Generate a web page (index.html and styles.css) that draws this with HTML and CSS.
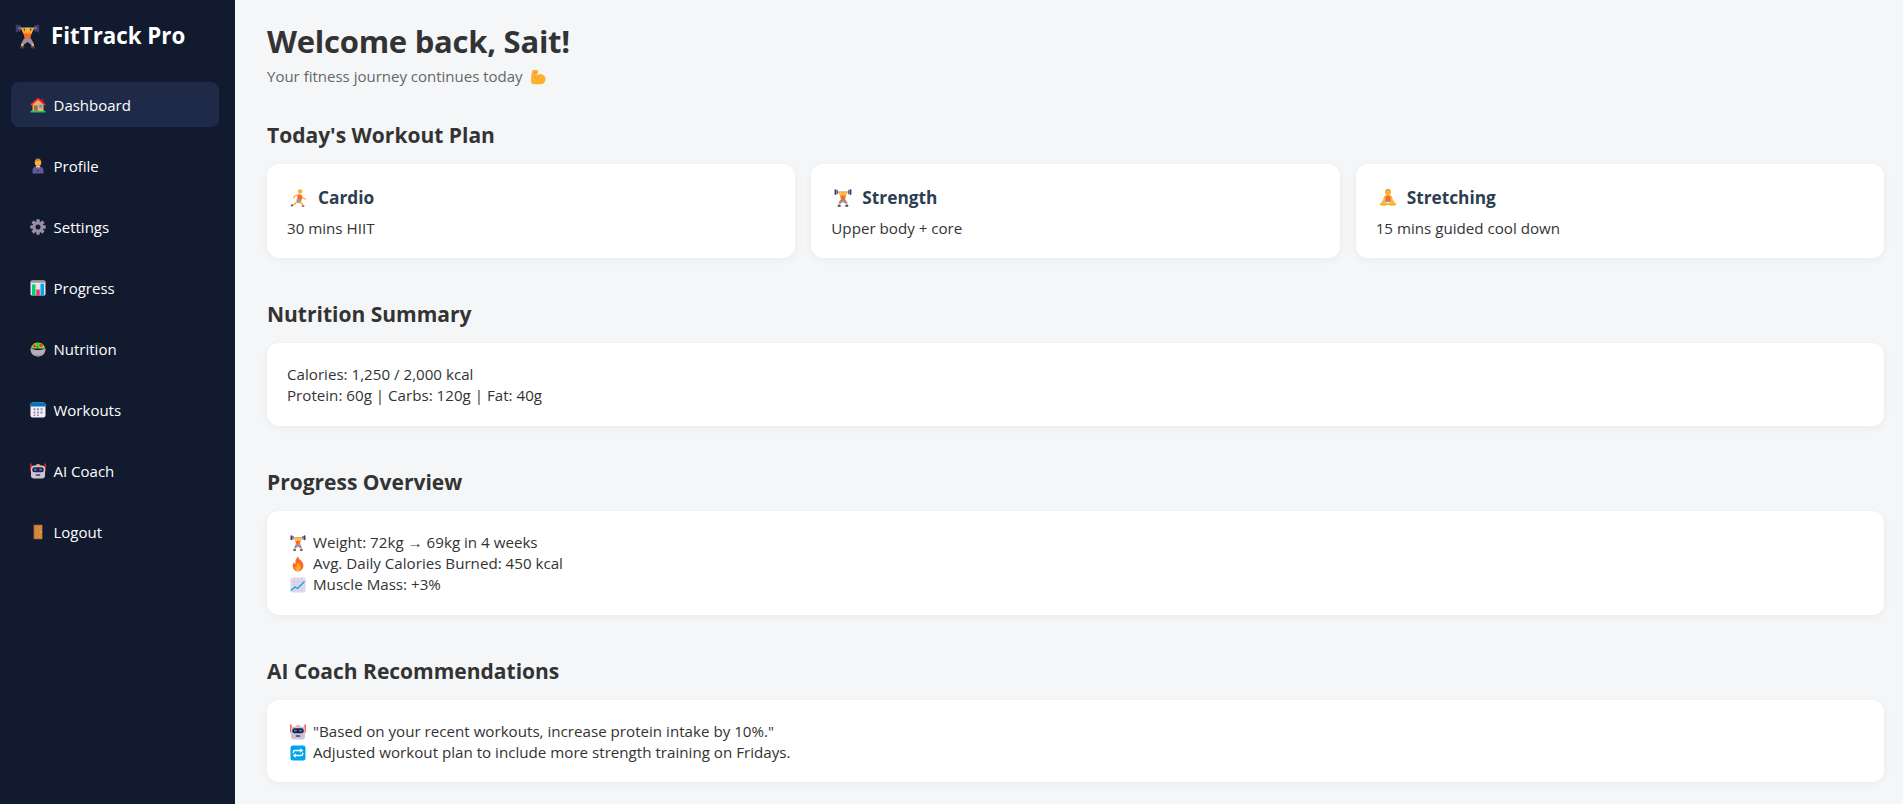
FILE: index.html
```html
<!DOCTYPE html>
<html lang="en">
<head>
<meta charset="utf-8">
<title>FitTrack Pro</title>
<link rel="stylesheet" href="styles.css">
</head>
<body>
<svg class="sprite" aria-hidden="true">
  <symbol id="i-lifter" viewBox="0 0 32 32">
    <rect x="3" y="4.400" width="26" height="2" fill="#9b9b9b"/>
    <rect x="1" y="0.500" width="3.200" height="10" rx="1.500" fill="#433b6b"/><rect x="4.600" y="1.500" width="2.400" height="8" rx="1.200" fill="#635994"/>
    <rect x="27.800" y="0.500" width="3.200" height="10" rx="1.500" fill="#433b6b"/><rect x="25" y="1.500" width="2.400" height="8" rx="1.200" fill="#635994"/>
    <path d="M7.500 5l3.500 8h10l3.500-8h-2.600l-3 5.500h-5.800L10.100 5z" fill="#ffb02e"/>
    <circle cx="16" cy="8" r="3.600" fill="#ffb02e"/>
    <path d="M11 12h10l-1.500 7.500h-7z" fill="#ff6723"/>
    <path d="M11.500 18.500h9l3.500 6.500-3.500 1.300L16 23l-4.500 3.300L8 25z" fill="#998ea4"/>
    <path d="M8 24.500l3.500 1.300L10.500 29.500H7.500zM24 24.500l-3.500 1.300L21.500 29.500h3z" fill="#ffb02e"/>
    <rect x="6.500" y="28.600" width="5.500" height="2.800" rx="1" fill="#433b6b"/><rect x="20" y="28.600" width="5.500" height="2.800" rx="1" fill="#433b6b"/>
  </symbol>
  <symbol id="i-house" viewBox="0 0 32 32">
    <rect x="1" y="27.500" width="30" height="3.500" rx="1" fill="#00d26a"/>
    <path d="M5 14L16 5l11 9v14H5z" fill="#f3ad61"/>
    <rect x="8" y="17" width="7.500" height="10.500" fill="#a56953"/>
    <rect x="18.500" y="15.500" width="6" height="6" rx=".8" fill="#5092ff"/>
    <rect x="23" y="3" width="3.500" height="7" fill="#ca0b4a"/>
    <path d="M16 1.500L.5 15l2 2.400L16 6l13.500 11.400 2-2.400z" fill="#f8312f"/>
  </symbol>
  <symbol id="i-worker" viewBox="0 0 32 32">
    <path d="M5 31v-6c0-6 5-9 11-9s11 3 11 9v6z" fill="#635994"/>
    <path d="M12 16h8l-3 8h-2z" fill="#e1d8ec"/><path d="M15 18h2l1 8-2 3-2-3z" fill="#433b6b"/>
    <circle cx="16" cy="9.500" r="6.500" fill="#ffb02e"/>
    <path d="M9.500 9c0-5 3-8 6.500-8s6.500 3 6.500 8c-1-2-2-3-3.500-3.500-2 1-4.500 1-6 .5-1.500.500-2.500 1.500-3.500 3z" fill="#d3883e"/>
  </symbol>
  <symbol id="i-gear" viewBox="0 0 32 32">
    <g fill="#998ea4"><rect x="12.500" y=".5" width="7" height="31" rx="1.500"/><rect x="12.500" y=".5" width="7" height="31" rx="1.500" transform="rotate(45 16 16)"/><rect x="12.500" y=".5" width="7" height="31" rx="1.500" transform="rotate(90 16 16)"/><rect x="12.500" y=".5" width="7" height="31" rx="1.500" transform="rotate(135 16 16)"/></g>
    <circle cx="16" cy="16" r="11" fill="#998ea4"/>
    <circle cx="16" cy="16" r="5" fill="#111a2e"/>
  </symbol>
  <symbol id="i-bars" viewBox="0 0 32 32">
    <rect x="1" y="1" width="30" height="30" rx="3" fill="#e8e1f0"/>
    <path d="M1 5.500V4a3 3 0 013-3h24a3 3 0 013 3v1.500z" fill="#9b9b9b"/>
    <rect x="4" y="9" width="7" height="22" fill="#00d26a"/>
    <rect x="12.500" y="19" width="7" height="12" fill="#f92f60"/>
    <rect x="21" y="7.500" width="7" height="23.500" fill="#00a6ed"/>
  </symbol>
  <symbol id="i-salad" viewBox="0 0 32 32">
    <path d="M2 15c0-6 6-12 14-12s14 6 14 12z" fill="#86d72f"/>
    <circle cx="9" cy="10" r="3" fill="#f8312f"/><circle cx="22" cy="8.500" r="3.400" fill="#f8312f"/><circle cx="15.500" cy="6" r="2.400" fill="#00d26a"/><circle cx="15" cy="11.500" r="2.200" fill="#008463"/>
    <path d="M1 14.500c4 2.500 9 3.500 15 3.500s11-1 15-3.500c.5 8.500-4 16.500-15 16.500S.5 23 1 14.500z" fill="#b4acbc"/>
    <path d="M6 26c3 3 6 5 10 5s7-2 10-5c-3 1.500-6 2-10 2s-7-.5-10-2z" fill="#998ea4"/>
  </symbol>
  <symbol id="i-cal" viewBox="0 0 32 32">
    <rect x="1" y="1" width="30" height="30" rx="4" fill="#f3eef8"/>
    <path d="M1 9V5a4 4 0 014-4h22a4 4 0 014 4v4z" fill="#0074ba"/>
    <g fill="#998ea4"><rect x="7" y="12.500" width="4" height="4"/><rect x="14" y="12.500" width="4" height="4"/><rect x="21" y="12.500" width="4" height="4"/><rect x="7" y="19" width="4" height="4"/><rect x="14" y="19" width="4" height="4"/><rect x="21" y="19" width="4" height="4"/><rect x="14" y="25" width="4" height="3"/><rect x="7" y="25" width="4" height="3"/></g>
  </symbol>
  <symbol id="i-robot" viewBox="0 0 32 32">
    <rect x=".5" y="1" width="2.600" height="16" fill="#f8312f"/><rect x="28.900" y="1" width="2.600" height="16" fill="#f8312f"/>
    <path d="M11 5.500c0-2 2-3.500 5-3.500s5 1.500 5 3.500z" fill="#ffb02e"/>
    <rect x="2" y="5" width="28" height="26" rx="6" fill="#cdc4d6"/>
    <rect x="4.500" y="8.500" width="23" height="10" rx="4.500" fill="#321b41"/>
    <rect x="8" y="11.500" width="5.500" height="3.500" rx="1" fill="#00a6ed"/><rect x="18.500" y="11.500" width="5.500" height="3.500" rx="1" fill="#00a6ed"/>
    <rect x="11.500" y="22.500" width="9" height="3" rx="1" fill="#433b6b"/>
  </symbol>
  <symbol id="i-door" viewBox="0 0 32 32">
    <rect x="6.500" y="1" width="19" height="30" rx="1.500" fill="#6d4534"/>
    <rect x="8.500" y="2.500" width="15.500" height="27" fill="#d3883e"/>
    <rect x="19.500" y="14.500" width="3" height="2" fill="#ffc83d"/>
  </symbol>
  <symbol id="i-runner" viewBox="0 0 32 32">
    <circle cx="18" cy="4.500" r="4" fill="#ffb02e"/>
    <path d="M14 10l-6.500 1L5 16.500l2.200.7 2-4.200 4.300-.5zM20.500 10l3 5.500 5.500 1.300-.5 2.200-6.500-1.500-3-3.700z" fill="#ffb02e"/>
    <path d="M13.500 9.500l7 .5 1 6.500-1.500 3.500-7-2z" fill="#ff6723"/>
    <path d="M12.500 17.500l8 2.700-1 4-7 .5-1-4.500z" fill="#9b9b9b"/>
    <path d="M13 22.500l-3 5-5.500 2-.8-2 4.500-2 2.500-4.200zM18.500 22.500l5.500 4v4h-2.500v-3L15.500 24.500z" fill="#ffb02e"/>
    <path d="M5 27l-3.800 1.200.8 3.300 4-1.800zM21 29.500h4.500V31.500H21z" fill="#635994"/>
  </symbol>
  <symbol id="i-yoga" viewBox="0 0 32 32">
    <path d="M11 4.500a5 4.500 0 0110 0v3H11z" fill="#d3883e"/>
    <circle cx="16" cy="6.500" r="4.600" fill="#ffb02e"/>
    <path d="M12 11h8c3 0 3.500 4 4.500 8l4 5.500H20L16 23l-4 1.500H3.500l4-5.500c1-4 1.500-8 4.500-8z" fill="#ffb02e"/>
    <path d="M12.500 12h7l1 9h-9z" fill="#ff6723"/>
    <rect x="12" y="19" width="8" height="4" fill="#998ea4"/>
    <path d="M2 25.500c4-2.500 10-2 14 0 4-2 10-2.500 14 0 1 1.500.5 4-1.500 4-4.500 0-9 .5-12.500-1-3.500 1.500-8 1-12.500 1-2 0-2.500-2.500-1.500-4z" fill="#ffb02e"/>
  </symbol>
  <symbol id="i-biceps" viewBox="0 0 32 32">
    <path d="M6 2h8c1.500 0 3 2 2.500 3.500L15 9l-2 4.500c3.500-3 7-4 10.500-3 4.500 1 7.500 5.500 7.500 10 0 5.500-4 10-10 10H8c-4 0-6-2.800-6-6.500 0-7.500 1-14.500 2.500-20.500C4.800 2.700 5.300 2 6 2z" fill="#ffb02e"/>
    <path d="M8.500 7l4 .5-1.500 2.500M10.500 14l-1.500 6M18 14c-2 .5-4 3-4 6.500" fill="none" stroke="#e19747" stroke-width="1.500"/>
  </symbol>
  <symbol id="i-fire" viewBox="0 0 32 32">
    <path d="M16 1c1 5 6 7 9 12 2.500 4 2.500 9-.5 13-2 3-5 5-8.500 5s-7-2-9-5.500c-2.500-4.500-2-9.500 1-13 .5 2 1.500 3 3 3.500C10 10 12 5 16 1z" fill="#ff6723"/>
    <path d="M16 13c.5 3 3.500 4.500 5 7.500 1.500 4-1 10-5 10s-6.500-5-5-9.500c.5 1 1 1.500 2 1.500-.2-3.500 1-7 3-9.500z" fill="#ffb02e"/>
  </symbol>
  <symbol id="i-chart" viewBox="0 0 32 32">
    <rect x="1" y="1" width="30" height="30" rx="3.500" fill="#e1d8ec"/>
    <path d="M9 1v30M16 1v30M23 1v30M1 9h30M1 16h30M1 23h30" stroke="#cdc4d6" stroke-width="1"/>
    <path d="M2 27l8-7 5 3 14-14" fill="none" stroke="#00a6ed" stroke-width="2.400"/>
  </symbol>
  <symbol id="i-repeat" viewBox="0 0 32 32">
    <rect x="1" y="1" width="30" height="30" rx="5" fill="#00a6ed"/>
    <path d="M6.500 16.500v-2a3.500 3.500 0 013.500-3.500h12M25.500 15.500v2a3.500 3.500 0 01-3.500 3.500H10" fill="none" stroke="#fff" stroke-width="2.600"/>
    <path d="M20.500 6.500l6 4.500-6 4.500zM11.500 16.500l-6 4.500 6 4.500z" fill="#fff"/>
  </symbol>
</svg>
<div class="app">
  <aside class="sidebar">
    <h2 class="brand"><svg class="icon-brand"><use href="#i-lifter"/></svg>FitTrack Pro</h2>
    <nav class="nav">
      <a class="nav-item active"><svg class="icon"><use href="#i-house"/></svg>Dashboard</a>
      <a class="nav-item"><svg class="icon"><use href="#i-worker"/></svg>Profile</a>
      <a class="nav-item"><svg class="icon"><use href="#i-gear"/></svg>Settings</a>
      <a class="nav-item"><svg class="icon"><use href="#i-bars"/></svg>Progress</a>
      <a class="nav-item"><svg class="icon"><use href="#i-salad"/></svg>Nutrition</a>
      <a class="nav-item"><svg class="icon"><use href="#i-cal"/></svg>Workouts</a>
      <a class="nav-item"><svg class="icon"><use href="#i-robot"/></svg>AI Coach</a>
      <a class="nav-item"><svg class="icon"><use href="#i-door"/></svg>Logout</a>
    </nav>
  </aside>
  <main class="main">
    <h1 class="title">Welcome back, Sait!</h1>
    <p class="subtitle">Your fitness journey continues today<svg class="icon icon-sub"><use href="#i-biceps"/></svg></p>
    <section class="section first">
      <h2 class="section-title">Today's Workout Plan</h2>
      <div class="plan">
        <div class="card"><h3 class="card-title"><svg class="icon-title"><use href="#i-runner"/></svg>Cardio</h3><p class="card-text">30 mins HIIT</p></div>
        <div class="card"><h3 class="card-title"><svg class="icon-title"><use href="#i-lifter"/></svg>Strength</h3><p class="card-text">Upper body + core</p></div>
        <div class="card"><h3 class="card-title"><svg class="icon-title"><use href="#i-yoga"/></svg>Stretching</h3><p class="card-text">15 mins guided cool down</p></div>
      </div>
    </section>
    <section class="section">
      <h2 class="section-title">Nutrition Summary</h2>
      <div class="card">Calories: 1,250 / 2,000 kcal<br>Protein: 60g | Carbs: 120g | Fat: 40g</div>
    </section>
    <section class="section">
      <h2 class="section-title">Progress Overview</h2>
      <div class="card"><svg class="icon"><use href="#i-lifter"/></svg>Weight: 72kg → 69kg in 4 weeks<br><svg class="icon"><use href="#i-fire"/></svg>Avg. Daily Calories Burned: 450 kcal<br><svg class="icon"><use href="#i-chart"/></svg>Muscle Mass: +3%</div>
    </section>
    <section class="section">
      <h2 class="section-title">AI Coach Recommendations</h2>
      <div class="card"><svg class="icon"><use href="#i-robot"/></svg>"Based on your recent workouts, increase protein intake by 10%."<br><svg class="icon"><use href="#i-repeat"/></svg>Adjusted workout plan to include more strength training on Fridays.</div>
    </section>
  </main>
</div>
</body>
</html>
```
FILE: styles.css
```css
* { box-sizing: border-box; }
html, body { margin: 0; height: 100%; overflow: hidden; }
body { font-family: "Open Sans", "Noto Sans", sans-serif; font-size: 15.15px; color: #333; background: #f4f6f8; }
.sprite { position: absolute; width: 0; height: 0; }
.app { display: flex; height: 804px; }
.sidebar { width: 235px; flex: none; background: #111a2e; color: #fff; padding: 20px 16px 20px 11px; }
.brand { display: flex; align-items: center; margin: 0 0 30px; padding-left: 4px; font-size: 22.3px; font-weight: 700; line-height: 32px; }
.icon-brand { width: 25px; height: 25px; margin-right: 11px; flex: none; }
.nav { display: flex; flex-direction: column; gap: 16px; }
.nav-item { display: flex; align-items: center; height: 45px; padding-left: 19px; border-radius: 8px; font-size: 15px; color: #fff; }
.active { background: #1e2a47; }
.icon { display: inline-block; width: 16px; height: 16px; margin: 0 7px 0 3px; vertical-align: -3px; }
.nav-item .icon { margin: 0 7.500px 0 0; }
.icon-sub { margin: 0 0 0 7px; }
.icon-title { display: inline-block; width: 18px; height: 18px; margin: 0 10px 0 3px; vertical-align: -3px; }
.main { flex: 1; padding: 19px 19px 20px 32px; }
.title { margin: 0 0 1px; font-size: 31px; letter-spacing: -.25px; line-height: 44px; color: #333; }
.subtitle { margin: 0; font-size: 15px; color: #666; line-height: 24px; }
.section { margin-top: 41px; }
.section.first { margin-top: 32px; }
.section-title { margin: 0 0 14px; font-size: 21px; line-height: 30px; color: #333; }
.plan { display: grid; grid-template-columns: repeat(3, 1fr); gap: 16px; }
.card { background: #fff; border-radius: 12px; padding: 21px 20px 19px; line-height: 21.33px; box-shadow: 0 2px 8px rgba(0,0,0,.05); }
.card-title { margin: 0 0 6px; font-size: 17.3px; line-height: 26px; color: #2c3e50; }
.card-text { margin: 0; line-height: 22px; }
```
